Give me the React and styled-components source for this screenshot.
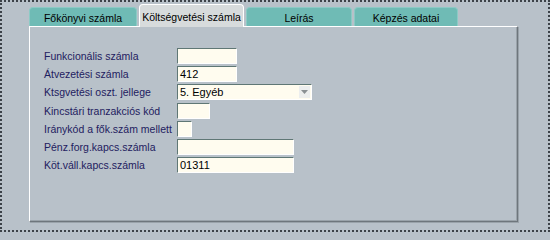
import React from 'react';
import styled, { createGlobalStyle } from 'styled-components';

const GlobalStyle = createGlobalStyle`
  html, body {
    margin: 0;
    padding: 0;
    background: #b8c1c9;
  }
  body {
    font-family: "Liberation Sans", Arial, sans-serif;
  }
`;

const tabs = [
  { label: 'Főkönyvi számla', width: 108 },
  { label: 'Költségvetési számla', width: 105, active: true },
  { label: 'Leírás', width: 106 },
  { label: 'Képzés adatai', width: 104 },
];

const rows = [
  { label: 'Funkcionális számla', width: 60, value: '' },
  { label: 'Átvezetési számla', width: 60, value: '412' },
  { label: 'Ktsgvetési oszt. jellege', width: 135, value: '5. Egyéb', select: true },
  { label: 'Kincstári tranzakciós kód', width: 33, value: '' },
  { label: 'Iránykód a fők.szám mellett', width: 15, value: '' },
  { label: 'Pénz.forg.kapcs.számla', width: 117, value: '' },
  { label: 'Köt.váll.kapcs.számla', width: 117, value: '01311' },
];

const App = () => {
  return (
    <>
      <GlobalStyle />
      <Frame>
        <TabRow>
          {tabs.map((t) => (
            <Tab key={t.label} $active={t.active} $width={t.width}>
              {t.label}
            </Tab>
          ))}
        </TabRow>
        <Panel>
          <Form>
            {rows.map((r) => (
              <React.Fragment key={r.label}>
                <Label>{r.label}</Label>
                {r.select ? (
                  <Select $width={r.width}>
                    <span>{r.value}</span>
                    <Arrow>
                      <svg width="7" height="4" viewBox="0 0 7 4">
                        <path d="M0 0h7L3.5 4z" fill="#8a9094" />
                      </svg>
                    </Arrow>
                  </Select>
                ) : (
                  <Field $width={r.width}>{r.value}</Field>
                )}
              </React.Fragment>
            ))}
          </Form>
        </Panel>
      </Frame>
    </>
  );
};

export default App;

const Frame = styled.div`
  box-sizing: border-box;
  width: 550px;
  height: 232px;
  border: 2px dotted #3c4248;
  background: #b8c1c9;
  padding: 3px 30px 8px 27px;
  display: flex;
  flex-direction: column;
`;

const TabRow = styled.div`
  display: flex;
  align-items: flex-end;
  gap: 2px;
  height: 21px;
  position: relative;
  z-index: 1;
`;

const Tab = styled.div`
  box-sizing: border-box;
  width: ${(p) => p.$width}px;
  height: ${(p) => (p.$active ? 23 : 19)}px;
  margin-bottom: ${(p) => (p.$active ? -1 : 0)}px;
  background: ${(p) => (p.$active ? '#d7dbdc' : '#6fbbb5')};
  border: 1px solid ${(p) => (p.$active ? '#ffffff' : '#8ccac5')};
  border-bottom: none;
  border-radius: 4px 4px 0 0;
  color: #000;
  font-size: 10.5px;
  display: flex;
  justify-content: center;
  align-items: center;
  padding-top: 1px;
  white-space: nowrap;
`;

const Panel = styled.div`
  box-sizing: border-box;
  width: 489px;
  height: 197px;
  border-top: 1px solid #ffffff;
  border-left: 1px solid #ffffff;
  border-right: 1px solid #6e767c;
  border-bottom: 1px solid #6e767c;
  box-shadow: inset -1px -1px 0 #9aa3aa, 1px 1px 0 #9aa3aa;
  background: #b8c1c9;
  padding: 21px 0 0 14px;
`;

const Form = styled.div`
  display: grid;
  grid-template-columns: 133px auto;
  grid-auto-rows: 16px;
  row-gap: 2.2px;
  align-items: center;
`;

const Label = styled.div`
  font-size: 10.5px;
  color: #1e2060;
  white-space: nowrap;
  line-height: 16px;
`;

const Field = styled.div`
  box-sizing: border-box;
  width: ${(p) => p.$width}px;
  height: 16px;
  background: #fffcef;
  border-top: 1px solid #5f7775;
  border-left: 1px solid #5f7775;
  border-right: 1px solid #ffffff;
  border-bottom: 1px solid #ffffff;
  font-size: 11px;
  line-height: 14px;
  padding-left: 2px;
  color: #000;
`;

const Select = styled(Field)`
  display: flex;
  justify-content: space-between;
  align-items: center;
  padding-right: 1px;
  span {
    line-height: 14px;
  }
`;

const Arrow = styled.div`
  width: 11px;
  height: 12px;
  background: #eceeee;
  display: flex;
  justify-content: center;
  align-items: center;
`;
